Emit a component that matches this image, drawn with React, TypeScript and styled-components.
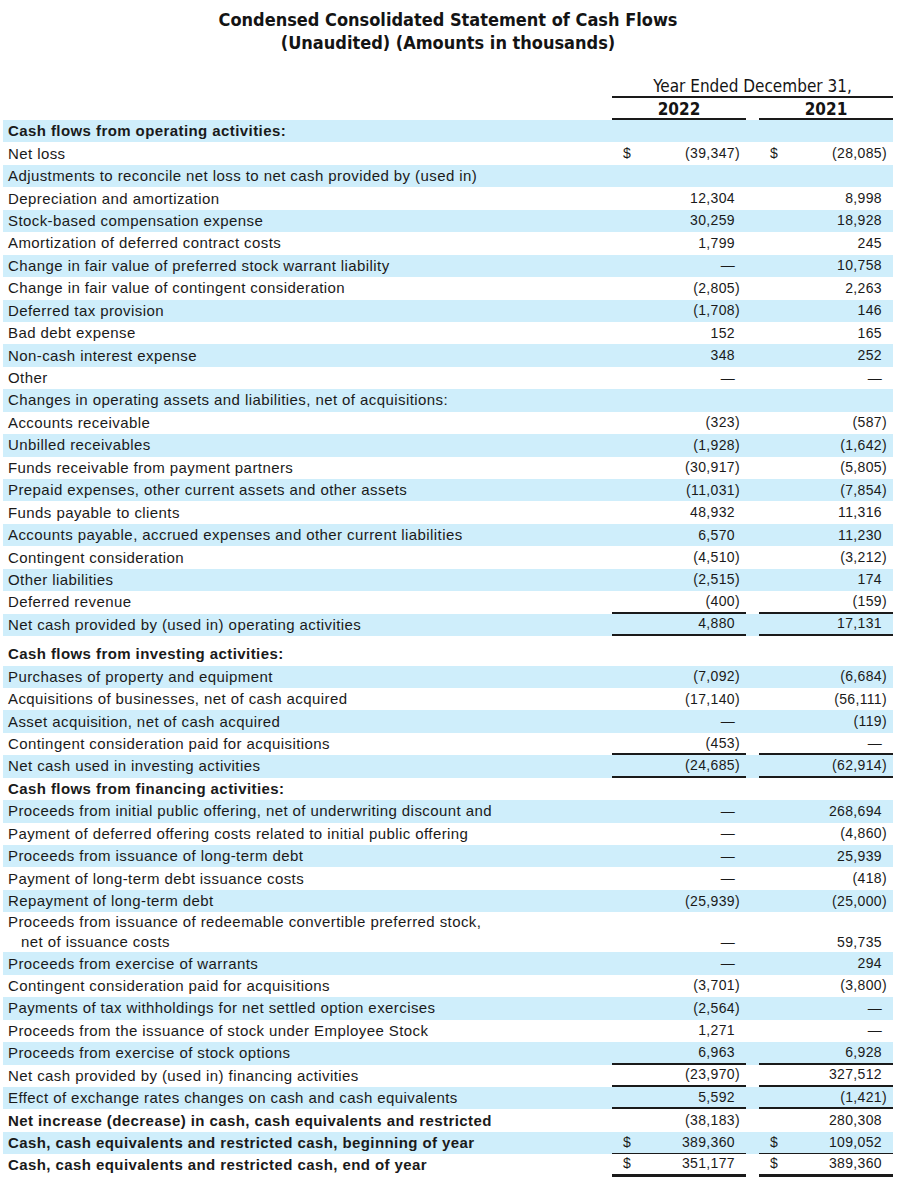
import React from 'react';
import styled, { createGlobalStyle } from 'styled-components';

const GlobalStyle = createGlobalStyle`
  html, body { margin: 0; padding: 0; background: #ffffff; }
  body {
    font-family: "Liberation Sans", Arial, sans-serif;
    color: #1a1a1a;
  }
`;

type Rule = 'single' | 'thin' | 'double';

interface Line {
  label: string;
  sub?: string;
  bold?: boolean;
  a?: string;
  b?: string;
  dollar?: boolean;
  rule?: Rule;
  spaced?: boolean;
}

const rows: Line[] = [
  { label: 'Cash flows from operating activities:', bold: true },
  { label: 'Net loss', a: '(39,347)', b: '(28,085)', dollar: true },
  { label: 'Adjustments to reconcile net loss to net cash provided by (used in)' },
  { label: 'Depreciation and amortization', a: '12,304', b: '8,998' },
  { label: 'Stock-based compensation expense', a: '30,259', b: '18,928' },
  { label: 'Amortization of deferred contract costs', a: '1,799', b: '245' },
  { label: 'Change in fair value of preferred stock warrant liability', a: '—', b: '10,758' },
  { label: 'Change in fair value of contingent consideration', a: '(2,805)', b: '2,263' },
  { label: 'Deferred tax provision', a: '(1,708)', b: '146' },
  { label: 'Bad debt expense', a: '152', b: '165' },
  { label: 'Non-cash interest expense', a: '348', b: '252' },
  { label: 'Other', a: '—', b: '—' },
  { label: 'Changes in operating assets and liabilities, net of acquisitions:' },
  { label: 'Accounts receivable', a: '(323)', b: '(587)' },
  { label: 'Unbilled receivables', a: '(1,928)', b: '(1,642)' },
  { label: 'Funds receivable from payment partners', a: '(30,917)', b: '(5,805)' },
  { label: 'Prepaid expenses, other current assets and other assets', a: '(11,031)', b: '(7,854)' },
  { label: 'Funds payable to clients', a: '48,932', b: '11,316' },
  { label: 'Accounts payable, accrued expenses and other current liabilities', a: '6,570', b: '11,230' },
  { label: 'Contingent consideration', a: '(4,510)', b: '(3,212)' },
  { label: 'Other liabilities', a: '(2,515)', b: '174' },
  { label: 'Deferred revenue', a: '(400)', b: '(159)', rule: 'single' },
  { label: 'Net cash provided by (used in) operating activities', a: '4,880', b: '17,131', rule: 'single' },
  { label: 'Cash flows from investing activities:', bold: true, spaced: true },
  { label: 'Purchases of property and equipment', a: '(7,092)', b: '(6,684)' },
  { label: 'Acquisitions of businesses, net of cash acquired', a: '(17,140)', b: '(56,111)' },
  { label: 'Asset acquisition, net of cash acquired', a: '—', b: '(119)' },
  { label: 'Contingent consideration paid for acquisitions', a: '(453)', b: '—', rule: 'single' },
  { label: 'Net cash used in investing activities', a: '(24,685)', b: '(62,914)', rule: 'single' },
  { label: 'Cash flows from financing activities:', bold: true },
  { label: 'Proceeds from initial public offering, net of underwriting discount and', a: '—', b: '268,694' },
  { label: 'Payment of deferred offering costs related to initial public offering', a: '—', b: '(4,860)' },
  { label: 'Proceeds from issuance of long-term debt', a: '—', b: '25,939' },
  { label: 'Payment of long-term debt issuance costs', a: '—', b: '(418)' },
  { label: 'Repayment of long-term debt', a: '(25,939)', b: '(25,000)' },
  {
    label: 'Proceeds from issuance of redeemable convertible preferred stock,',
    sub: 'net of issuance costs',
    a: '—',
    b: '59,735',
  },
  { label: 'Proceeds from exercise of warrants', a: '—', b: '294' },
  { label: 'Contingent consideration paid for acquisitions', a: '(3,701)', b: '(3,800)' },
  { label: 'Payments of tax withholdings for net settled option exercises', a: '(2,564)', b: '—' },
  { label: 'Proceeds from the issuance of stock under Employee Stock', a: '1,271', b: '—' },
  { label: 'Proceeds from exercise of stock options', a: '6,963', b: '6,928', rule: 'single' },
  { label: 'Net cash provided by (used in) financing activities', a: '(23,970)', b: '327,512', rule: 'single' },
  { label: 'Effect of exchange rates changes on cash and cash equivalents', a: '5,592', b: '(1,421)', rule: 'single' },
  { label: 'Net increase (decrease) in cash, cash equivalents and restricted', bold: true, a: '(38,183)', b: '280,308' },
  {
    label: 'Cash, cash equivalents and restricted cash, beginning of year',
    bold: true,
    a: '389,360',
    b: '109,052',
    dollar: true,
    rule: 'thin',
  },
  {
    label: 'Cash, cash equivalents and restricted cash, end of year',
    bold: true,
    a: '351,177',
    b: '389,360',
    dollar: true,
    rule: 'double',
  },
];

const NARROW = `"Liberation Sans Narrow", "Arial Narrow", "DejaVu Sans Condensed", sans-serif`;
const COLS = '1fr 134px 13px 134px';
const INK = '#1a1a1a';

const Page = styled.div`
  width: 902px;
  padding: 8px 0 12px;
  box-sizing: border-box;
`;

const Title = styled.h1`
  margin: 0 0 0 3px;
  width: 890px;
  text-align: center;
  font-family: ${NARROW};
  font-size: 18px;
  font-weight: 700;
  line-height: 23px;
  color: #141414;
`;

const Sheet = styled.div`
  width: 890px;
  margin: 23px 0 0 3px;
`;

const HeadRow = styled.div`
  display: grid;
  grid-template-columns: ${COLS};
  font-family: ${NARROW};
  font-size: 17px;
  color: #141414;
`;

const PeriodCell = styled.div`
  grid-column: 2 / 5;
  text-align: center;
  line-height: 19px;
  border-bottom: 2px solid ${INK};
`;

const YearCell = styled.div<{ $col: number }>`
  grid-column: ${(p) => p.$col};
  margin-top: 2px;
  text-align: center;
  line-height: 18px;
  font-weight: 600;
  border-bottom: 2px solid ${INK};
`;

const Row = styled.div<{ $stripe: boolean; $spaced?: boolean }>`
  display: grid;
  grid-template-columns: ${COLS};
  min-height: 22.45px;
  margin-top: ${(p) => (p.$spaced ? '7px' : '0')};
  background: ${(p) => (p.$stripe ? '#cfeefb' : '#ffffff')};
`;

const Label = styled.div<{ $bold?: boolean }>`
  padding-left: 5px;
  display: flex;
  flex-direction: column;
  justify-content: center;
  font-size: 15px;
  letter-spacing: 0.42px;
  line-height: 20px;
  font-weight: ${(p) => (p.$bold ? 700 : 400)};
  white-space: nowrap;
`;

const SubLabel = styled.span`
  padding-left: 13px;
`;

const ruleStyle: Record<Rule, string> = {
  single: `2px solid ${INK}`,
  thin: `1px solid ${INK}`,
  double: `3px solid ${INK}`,
};

const Amount = styled.div<{ $rule?: Rule; $bottom?: boolean }>`
  display: flex;
  justify-content: space-between;
  align-items: ${(p) => (p.$bottom ? 'flex-end' : 'center')};
  padding: 0 6px 0 11px;
  font-size: 14px;
  letter-spacing: 0.35px;
  line-height: 19px;
  border-bottom: ${(p) => (p.$rule ? ruleStyle[p.$rule] : 'none')};
`;

const Ghost = styled.span`
  visibility: hidden;
`;

const Spacer = styled.div``;

function Value({ text }: { text?: string }) {
  if (!text) return <span />;
  const neg = text.endsWith(')');
  return (
    <span>
      {text}
      {!neg && <Ghost>)</Ghost>}
    </span>
  );
}

function AmountCell({ line, value }: { line: Line; value?: string }) {
  return (
    <Amount $rule={line.rule} $bottom={!!line.sub}>
      <span>{line.dollar ? '$' : ''}</span>
      <Value text={value} />
    </Amount>
  );
}

export default function App() {
  return (
    <>
      <GlobalStyle />
      <Page>
        <Title>
          Condensed Consolidated Statement of Cash Flows
          <br />
          (Unaudited) (Amounts in thousands)
        </Title>
        <Sheet>
          <HeadRow>
            <PeriodCell>Year Ended December 31,</PeriodCell>
          </HeadRow>
          <HeadRow>
            <YearCell $col={2}>2022</YearCell>
            <YearCell $col={4}>2021</YearCell>
          </HeadRow>
          {rows.map((line, i) => (
            <Row key={i} $stripe={i % 2 === 0} $spaced={line.spaced}>
              <Label $bold={line.bold}>
                <span>{line.label}</span>
                {line.sub && <SubLabel>{line.sub}</SubLabel>}
              </Label>
              <AmountCell line={line} value={line.a} />
              <Spacer />
              <AmountCell line={line} value={line.b} />
            </Row>
          ))}
        </Sheet>
      </Page>
    </>
  );
}
